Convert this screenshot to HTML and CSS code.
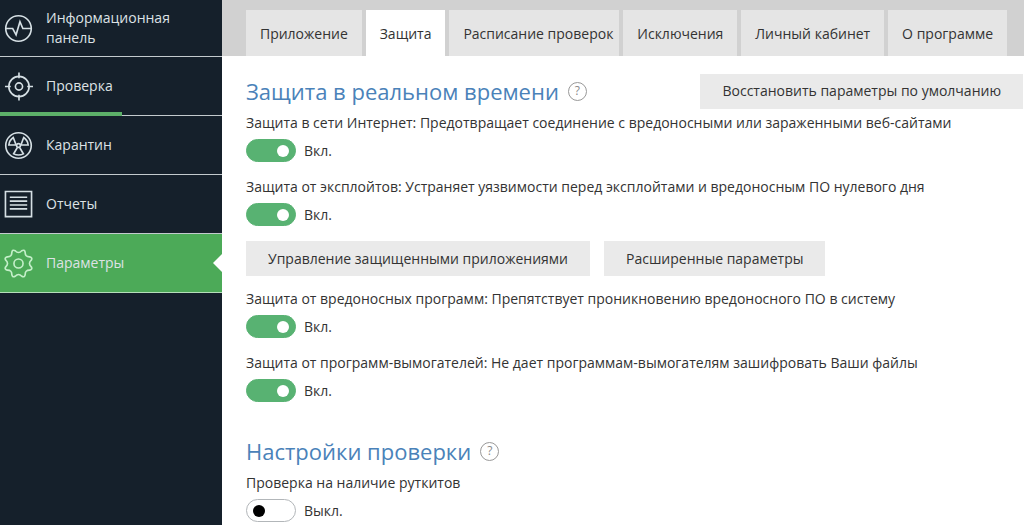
FILE: index.html
```html
<!DOCTYPE html>
<html lang="ru">
<head>
<meta charset="utf-8">
<meta name="viewport" content="width=device-width, initial-scale=1">
<title>Параметры</title>
<link rel="stylesheet" href="styles.css">
</head>
<body>
<div class="app">
  <nav class="sidebar">
    <a class="nav-item" href="#dashboard">
      <svg class="nav-icon" viewBox="0 0 30 30"><circle cx="15" cy="15" r="13.2"/><path d="M2 15h7l3.500 6.500L16.500 8l3 7H28"/></svg>
      <span>Информационная панель</span>
    </a>
    <a class="nav-item scanning" href="#scan">
      <svg class="nav-icon" viewBox="0 0 30 30"><circle cx="15.500" cy="15" r="10.500"/><circle cx="15.500" cy="15" r="3.700"/><path d="M15.500 .5v6M15.500 23.500v6M1 15h6M24 15h6"/></svg>
      <span>Проверка</span>
    </a>
    <a class="nav-item" href="#quarantine">
      <svg class="nav-icon" viewBox="0 0 30 30"><circle cx="15" cy="15" r="13.200"/><circle cx="15" cy="15" r="2"/><path d="M12.500 14.500H5c.3-3.500 2-6 4.600-7.800zM17.500 14.500H25c-.3-3.500-2-6-4.600-7.800zM13.700 17.300L10 23.500c3.200 1.700 6.800 1.700 10 0l-3.700-6.200"/></svg>
      <span>Карантин</span>
    </a>
    <a class="nav-item" href="#reports">
      <svg class="nav-icon" viewBox="0 0 30 30"><path d="M1.500 1.500h27v26h-27zM6 7.500h18M6 11.500h18M6 15.500h18M6 19.500h18"/></svg>
      <span>Отчеты</span>
    </a>
    <a class="nav-item active" href="#settings" aria-current="page">
      <svg class="nav-icon" viewBox="0 0 30 30"><path d="M28.200 18.400Q29.800 21.100 26.700 21.900Q21.700 21.700 21.900 26.700Q21.100 29.800 18.400 28.200Q15 24.500 11.600 28.200Q8.900 29.800 8.100 26.700Q8.300 21.700 3.300 21.900Q.2 21.100 1.800 18.400Q5.500 15 1.800 11.600Q.2 8.900 3.300 8.100Q8.300 8.300 8.100 3.300Q8.900 .2 11.600 1.800Q15 5.500 18.400 1.800Q21.100 .2 21.900 3.300Q21.700 8.300 26.700 8.100Q29.800 8.900 28.200 11.600Q24.500 15 28.200 18.400z"/><circle cx="15" cy="15" r="4.700"/></svg>
      <span>Параметры</span>
    </a>
  </nav>

  <main class="main">
    <div class="tabs" role="tablist">
      <button class="tab" role="tab" type="button">Приложение</button>
      <button class="tab selected" role="tab" type="button" aria-selected="true">Защита</button>
      <button class="tab wide" role="tab" type="button">Расписание проверок</button>
      <button class="tab" role="tab" type="button">Исключения</button>
      <button class="tab" role="tab" type="button">Личный кабинет</button>
      <button class="tab" role="tab" type="button">О программе</button>
    </div>

    <div class="content">
      <section>
        <div class="heading-row">
          <h2 class="heading">Защита в реальном времени</h2>
          <button class="help" type="button" aria-label="Справка">?</button>
          <button class="button restore" type="button">Восстановить параметры по умолчанию</button>
        </div>
        <div class="setting">
          <label class="setting-title" for="web">Защита в сети Интернет: Предотвращает соединение с вредоносными или зараженными веб-сайтами</label>
          <div class="switch-row"><input class="switch" id="web" type="checkbox" checked><span>Вкл.</span></div>
        </div>
        <div class="setting">
          <label class="setting-title" for="exploit">Защита от эксплойтов: Устраняет уязвимости перед эксплойтами и вредоносным ПО нулевого дня</label>
          <div class="switch-row"><input class="switch" id="exploit" type="checkbox" checked><span>Вкл.</span></div>
        </div>
        <div class="button-row">
          <button class="button" type="button">Управление защищенными приложениями</button>
          <button class="button" type="button">Расширенные параметры</button>
        </div>
        <div class="setting">
          <label class="setting-title" for="malware">Защита от вредоносных программ: Препятствует проникновению вредоносного ПО в систему</label>
          <div class="switch-row"><input class="switch" id="malware" type="checkbox" checked><span>Вкл.</span></div>
        </div>
        <div class="setting">
          <label class="setting-title" for="ransom">Защита от программ-вымогателей: Не дает программам-вымогателям зашифровать Ваши файлы</label>
          <div class="switch-row"><input class="switch" id="ransom" type="checkbox" checked><span>Вкл.</span></div>
        </div>
      </section>

      <section class="scan-section">
        <div class="heading-row">
          <h2 class="heading">Настройки проверки</h2>
          <button class="help" type="button" aria-label="Справка">?</button>
        </div>
        <div class="setting">
          <label class="setting-title" for="rootkit">Проверка на наличие руткитов</label>
          <div class="switch-row"><input class="switch" id="rootkit" type="checkbox"><span>Выкл.</span></div>
        </div>
      </section>
    </div>
  </main>
</div>
</body>
</html>
```
FILE: styles.css
```css
* {
  box-sizing: border-box;
}

body {
  margin: 0;
  font: 14px/20px "Open Sans", "Noto Sans", sans-serif;
  color: #333;
  background: #fff;
}

button {
  border: 0;
  padding: 0;
  font: inherit;
  color: inherit;
  white-space: nowrap;
  cursor: pointer;
}

.app {
  display: grid;
  grid-template-columns: 222px minmax(0, 1fr);
  height: 100vh;
  overflow: hidden;
}

.sidebar {
  background: #15202b;
}

.nav-item {
  position: relative;
  display: flex;
  align-items: center;
  gap: 13px;
  min-height: 59px;
  padding: 0 32px 0 4px;
  border-bottom: 1px solid #c3cace;
  color: #dde2e5;
  text-decoration: none;
}

.nav-item:first-child {
  min-height: 57px;
}

.nav-icon {
  flex: none;
  width: 29px;
  height: 29px;
  fill: none;
  stroke: #d5dfe4;
  stroke-width: 1.7;
}

.scanning::after {
  content: "";
  position: absolute;
  left: 0;
  bottom: -1px;
  width: 55%;
  height: 4px;
  background: #5cb069;
}

.active {
  background: #4caa58;
  border-bottom-color: #b5dfbb;
}

.active .nav-icon {
  stroke: #c4efc9;
}

.active::after {
  content: "";
  position: absolute;
  right: 0;
  top: 50%;
  border: solid transparent;
  border-width: 9px 9px 9px 0;
  border-right-color: #fff;
  transform: translateY(-50%);
}

.tabs {
  display: flex;
  gap: 4px;
  padding: 10px 17px 0 24px;
  background: #d1d1d1;
}

.tab {
  flex: 1 1 auto;
  height: 46px;
  padding: 1px 13px 0;
  background: #e5e5e5;
}

.selected {
  background: #fff;
}

.wide {
  padding: 1px 5px 0 13px;
}

.content {
  padding: 17px 1px 0 24px;
}

.heading-row {
  display: flex;
  align-items: center;
  gap: 9px;
  min-height: 36px;
}

.heading {
  margin: 0;
  font-size: 22px;
  line-height: 32px;
  font-weight: 400;
  color: #4a82b9;
}

.help {
  width: 19px;
  height: 19px;
  border: 1px solid #999;
  border-radius: 50%;
  background: none;
  font-size: 12px;
  line-height: 16px;
  color: #8a8a8a;
}

.button {
  height: 35px;
  padding: 0 22px;
  background: #eaeaea;
}

.restore {
  margin-left: auto;
}

.setting {
  margin-bottom: 15px;
}

.setting-title {
  display: block;
  margin-top: 4px;
}

.switch-row {
  display: flex;
  align-items: center;
  gap: 8px;
  margin-top: 6px;
}

.switch {
  appearance: none;
  display: flex;
  align-items: center;
  width: 50px;
  height: 23px;
  margin: 0;
  padding: 0 6px;
  border: 1px solid #b2b6b9;
  border-radius: 12px;
  background: #fff;
}

.switch::before {
  content: "";
  width: 12px;
  height: 12px;
  border-radius: 50%;
  background: #000;
}

.switch:checked {
  justify-content: flex-end;
  border-color: #58b272;
  background: #58b272;
}

.switch:checked::before {
  background: #fff;
}

.button-row {
  display: flex;
  gap: 14px;
  margin-bottom: 13px;
}

.scan-section {
  margin-top: 31px;
}
```
